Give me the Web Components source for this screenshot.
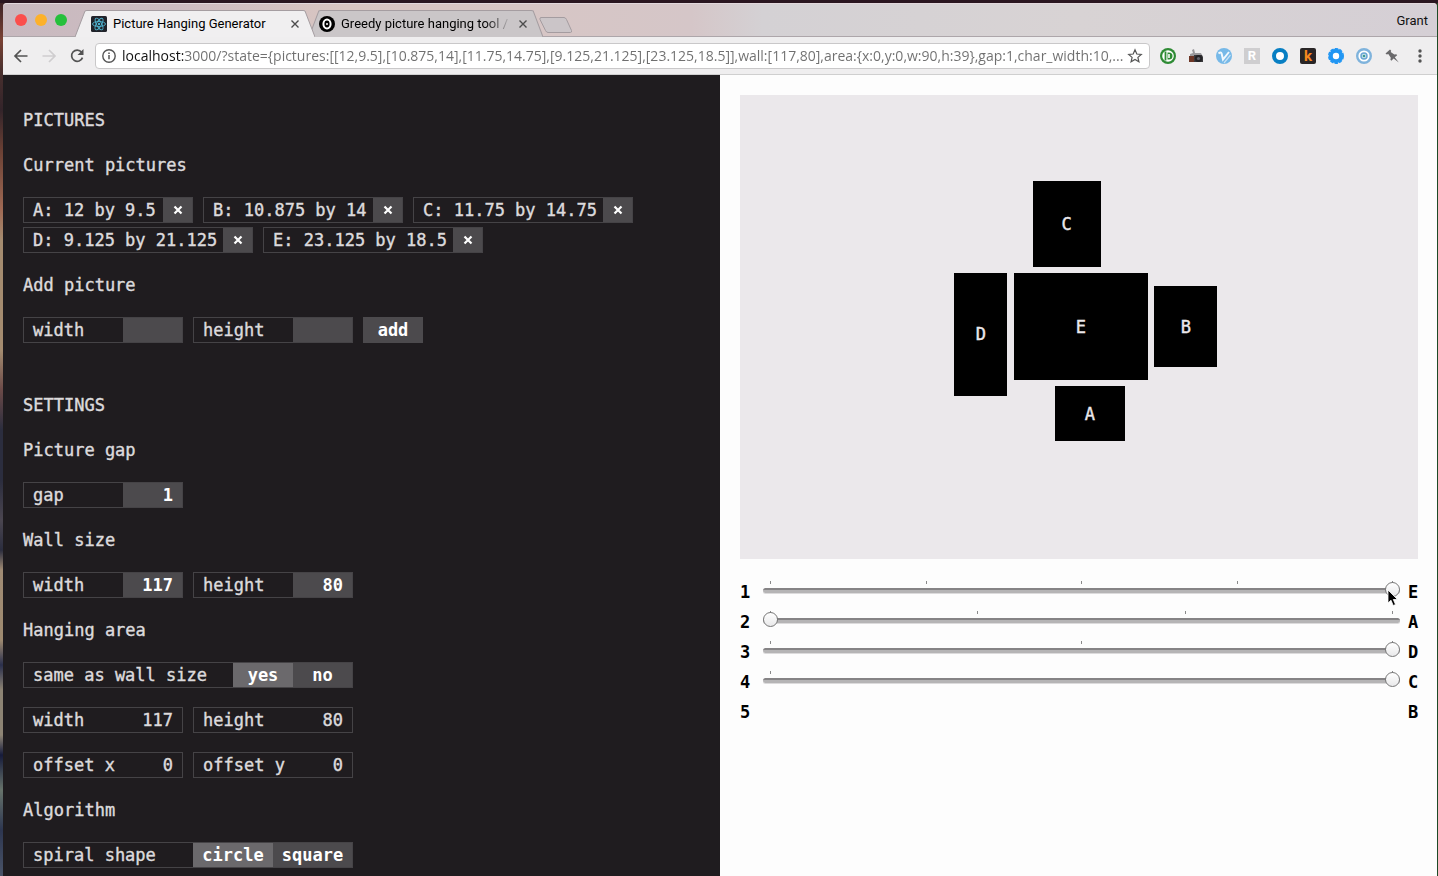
<!DOCTYPE html>
<html lang="en">
<head>
<meta charset="utf-8">
<title>Picture Hanging Generator</title>
<style>
html, body { margin: 0; height: 100%; overflow: hidden; }
body { background: #1a1014; }
</style>
</head>
<body>
<desktop-frame>
  <browser-chrome></browser-chrome>
  <hanging-app></hanging-app>
</desktop-frame>

<script>
const define = (name, html, setup) => {
  const tpl = document.createElement('template');
  tpl.innerHTML = html;
  customElements.define(name, class extends HTMLElement {
    connectedCallback() {
      if (this.shadowRoot) return;
      this.attachShadow({ mode: 'open' }).append(tpl.content.cloneNode(true));
      if (setup) setup(this, this.shadowRoot);
    }
  });
};

/* Width of one character cell, used to size labelled boxes */
const CELL = 10;

define('desktop-frame', `
<style>
:host { display: flex; flex-direction: column; box-sizing: border-box; height: 100vh; padding: 3px 1px 0 3px;
  background:
    linear-gradient(#2a1620, #2a1620) top / 100% 3px no-repeat,
    linear-gradient(#1d4a26, #1d4a26) right / 1px 100% no-repeat,
    linear-gradient(#3a2226 0, #7a4234 40px, #4a302e 70px, #33242a 110px, #6a4034 150px, #a06a54 210px, #a58c70 240px, #a58c70 350px, #6b4a48 390px, #2b2d3e 430px, #2b2d3e 480px, #4b4650 520px, #2b2d3e 550px, #a08b74 570px, #9e8a70 640px, #2a2f4c 665px, #8d8474 690px, #8d8474 735px, #161b3b 755px, #67736b 790px, #2d3650 830px, #4a5468 100%); }
::slotted(hanging-app) { flex: 1; min-height: 0; }
</style>
<slot></slot>`);

define('browser-tab', `
<style>
:host { display: block; flex: none; height: 27px; position: relative; font: 13px Roboto, sans-serif; color: #000; }
svg.shape { position: absolute; inset: 0; width: 100%; height: 100%; }
.row { position: relative; height: 27px; display: flex; align-items: center; padding: 0 15px 0 var(--tab-inset, 16px); gap: 6px; }
.title { flex: 1; min-width: 0; overflow: hidden; white-space: nowrap; }
:host([faded]) .title { -webkit-mask-image: linear-gradient(90deg, #000 84%, transparent); mask-image: linear-gradient(90deg, #000 84%, transparent); }
button { all: unset; width: 10px; height: 10px; display: flex; }
::slotted(svg) { flex: none; }
</style>
<svg class="shape" viewBox="0 0 240 27" preserveAspectRatio="none" aria-hidden="true">
  <path d="M0 27 L10 1 Q11 0.5 12 0.5 L228 0.5 Q229 0.5 230 1 L240 27 Z" fill="var(--tab-fill, #f0eff0)"/>
  <path d="M0 27 L10 1 Q11 0.5 12 0.5 L228 0.5 Q229 0.5 230 1 L240 27" fill="none" stroke="#a59da1" vector-effect="non-scaling-stroke"/>
</svg>
<div class="row"><slot name="icon"></slot><span class="title"><slot></slot></span>
<button aria-label="Close tab"><svg width="10" height="10" viewBox="0 0 10 10"><path d="M1.5 1.5l7 7M8.5 1.5l-7 7" stroke="#4c4c4c" stroke-width="1.4"/></svg></button></div>`);

define('browser-chrome', `
<style>
:host { display: block; flex: none; font-family: Roboto, sans-serif; }
button { all: unset; }
.strip { display: flex; align-items: flex-end; height: 34px; padding: 0 9px 0 12px; border-radius: 4px 4px 0 0;
  background: linear-gradient(90deg, #c8b9bf, #cdbcc1 12%, #d9c6c2 24%, #d5c6c8 48%, #d4d1d4 53%, #d8d3d4 75%, #d5cfd5); box-shadow: inset 0 -1px #ada6aa, inset 0 1px #e2d8dc; }
.lights { display: flex; gap: 8px; align-self: center; width: 60px; }
.lights button { width: 12px; height: 12px; border-radius: 50%; background: var(--c); }
browser-tab:first-of-type { width: 240px; z-index: 1; }
browser-tab:last-of-type { width: 234px; margin-left: -6px; --tab-fill: #cac6c8; --tab-inset: 10px; }
.new { align-self: center; margin: 9px 0 0 -4px; display: flex; }
.user { margin-left: auto; align-self: center; font-size: 13px; color: #111; }
.bar { display: flex; align-items: center; height: 37px; padding: 0 3px 0 4px; background: #efeeef; border-bottom: 1px solid #cfcfcf; }
.bar > button { width: 28px; height: 28px; display: flex; align-items: center; justify-content: center; flex: none; }
.address { flex: 1; min-width: 0; margin: 0 4px; height: 24px; display: flex; align-items: center; padding: 0 6px 0 5px; background: #fff; border: 1px solid #c9c8c9; border-radius: 4px; }
.address svg { flex: none; }
input { all: unset; flex: 1; min-width: 0; margin-left: 5px; height: 24px; font: 14px "Open Sans", sans-serif; color: #6f6f6f; -webkit-text-fill-color: transparent;
  background: linear-gradient(90deg, #111 61px, #6f6f6f 61px); -webkit-background-clip: text; background-clip: text; }
.tile { width: 16px; height: 16px; display: block; text-align: center; font: bold 13px/16px Roboto, sans-serif; color: #fff; background: #cfced0; }
.tile.k { background: #292526; color: #f7891e; border-radius: 2px; font-size: 15px; }
</style>
<div class="strip">
  <div class="lights"><button style="--c:#fb4f4c" aria-label="Close"></button><button style="--c:#fdb12a" aria-label="Minimise"></button><button style="--c:#25c03b" aria-label="Zoom"></button></div>
  <browser-tab>
    <svg slot="icon" width="16" height="16" viewBox="0 0 16 16"><rect width="16" height="16" rx="1.5" fill="#20232a"/><g fill="none" stroke="#4fb4d0" stroke-width=".9"><ellipse cx="8" cy="8" rx="6.5" ry="2.5"/><ellipse cx="8" cy="8" rx="6.5" ry="2.5" transform="rotate(60 8 8)"/><ellipse cx="8" cy="8" rx="6.5" ry="2.5" transform="rotate(120 8 8)"/></g><circle cx="8" cy="8" r="1.2" fill="#4fb4d0"/></svg>Picture Hanging Generator</browser-tab>
  <browser-tab faded>
    <svg slot="icon" width="16" height="16" viewBox="0 0 16 16"><circle cx="8" cy="8" r="8" fill="#000"/><ellipse cx="8" cy="8" rx="3.600" ry="4.400" fill="none" stroke="#fff" stroke-width="2"/><circle cx="8" cy="8" r="1" fill="#fff"/></svg>Greedy picture hanging tool / Grant</browser-tab>
  <button class="new" aria-label="New tab"><svg width="34" height="18" viewBox="0 0 34 18"><path d="M2 1.5h23q1.500 0 2.500 2l5 11q.5 2-1 2H9q-1.500 0-2.500-2L1 3.500Q.5 1.500 2 1.500z" fill="#cbc5c8" stroke="#a49ca0"/></svg></button>
  <span class="user">Grant</span>
</div>
<div class="bar">
  <button aria-label="Back"><svg width="16" height="16" viewBox="0 0 16 16" fill="none" stroke="#535353" stroke-width="1.700"><path d="M14.500 8H2.500M8 2L2 8l6 6"/></svg></button>
  <button aria-label="Forward"><svg width="16" height="16" viewBox="0 0 16 16" fill="none" stroke="#cfcdcf" stroke-width="1.700"><path d="M1.500 8h12M8 2l6 6-6 6"/></svg></button>
  <button aria-label="Reload"><svg width="16" height="16" viewBox="0 0 16 16"><path d="M12.600 4.200A5.600 5.600 0 1 0 13.500 9.600" fill="none" stroke="#535353" stroke-width="1.700"/><path d="M14.500 1v6h-6z" fill="#535353"/></svg></button>
  <label class="address">
    <svg width="16" height="16" viewBox="0 0 16 16" aria-hidden="true"><circle cx="8" cy="8" r="6.200" fill="none" stroke="#555" stroke-width="1.400"/><path d="M8 7v4.300M8 4.400V6" stroke="#555" stroke-width="1.500"/></svg>
    <input type="text" aria-label="Address" value="localhost:3000/?state={pictures:[[12,9.5],[10.875,14],[11.75,14.75],[9.125,21.125],[23.125,18.5]],wall:[117,80],area:{x:0,y:0,w:90,h:39},gap:1,char_width:10,...">
    <svg width="16" height="16" viewBox="0 0 16 16" aria-hidden="true"><path d="M8 1.800l1.800 4.200 4.500.4-3.400 3 1 4.400L8 11.400l-3.900 2.400 1-4.400-3.400-3 4.500-.4z" fill="none" stroke="#555" stroke-width="1.200"/></svg>
  </label>
  <button aria-label="Dashboard extension"><svg width="16" height="16" viewBox="0 0 16 16"><circle cx="8" cy="8" r="8" fill="#2e8b34"/><circle cx="8" cy="8" r="5.800" fill="#fff"/><path d="M5.500 3.500v9" stroke="#2e8b34" stroke-width="1.800"/><path d="M7.500 4.500H9a3.500 3.500 0 0 1 0 7H7.500z" fill="#2e8b34"/><path d="M9 6v4" stroke="#fff" stroke-width="1.600"/></svg></button>
  <button aria-label="Camera"><svg width="16" height="16" viewBox="0 0 16 16"><path d="M4 2l2-1 1 4h6l1 2v3H2V6l3-1z" fill="#9a999c"/><path d="M1 8h6v6H1z" fill="#6d3626"/><path d="M6 7h8l1 2v5H6z" fill="#3a393c"/><circle cx="10.500" cy="10.500" r="3.600" fill="#232225"/><circle cx="10.500" cy="10.500" r="1.600" fill="#62636b"/></svg></button>
  <button aria-label="Vector extension"><svg width="16" height="16" viewBox="0 0 16 16"><circle cx="8" cy="8" r="8" fill="#77b9e8"/><path d="M2.500 5.500q2.500-2 3.100 0L7 11.500l6-7.500" fill="none" stroke="#f2f8fd" stroke-width="2"/><path d="M8 15l6.500-8" fill="none" stroke="#c9e2f5" stroke-width="1.200"/></svg></button>
  <button aria-label="Reader"><span class="tile">R</span></button>
  <button aria-label="Ring extension"><svg width="16" height="16" viewBox="0 0 16 16"><circle cx="8" cy="8" r="6" fill="#fff" stroke="#087fc3" stroke-width="4"/></svg></button>
  <button aria-label="Keyword extension"><span class="tile k">k</span></button>
  <button aria-label="Gear extension"><svg width="16" height="16" viewBox="0 0 16 16"><circle cx="8" cy="8" r="5.200" fill="#fff" stroke="#2196f3" stroke-width="4"/><circle cx="8" cy="8" r="7.300" fill="none" stroke="#2196f3" stroke-width="1.400" stroke-dasharray="3.500 1.200"/></svg></button>
  <button aria-label="Eye extension"><svg width="16" height="16" viewBox="0 0 16 16"><circle cx="8" cy="8" r="6.800" fill="#fff" stroke="#7fb3dc" stroke-width="2.400"/><circle cx="8" cy="8" r="3" fill="#cfe4ea" stroke="#6ba6d4" stroke-width="1.500"/><circle cx="8" cy="8" r="1.300" fill="#3b9a93"/></svg></button>
  <button aria-label="Pin"><svg width="16" height="16" viewBox="0 0 16 16"><path d="M1.500 5.500L6 1.500l1.200 1.200-.5 1.300 3.600 2.600 2-.3.900 1-2.400 2 4 5.200-5.200-4-2.200 2.300-1-1 .4-2-2.500-3.700-1.500.4z" fill="#6a696b"/></svg></button>
  <button aria-label="Menu"><svg width="16" height="16" viewBox="0 0 16 16" fill="#535353"><circle cx="8" cy="3" r="1.700"/><circle cx="8" cy="8" r="1.700"/><circle cx="8" cy="13" r="1.700"/></svg></button>
</div>`);

/* A picture in the list, with its remove button */
define('picture-chip', `
<style>
:host { display: flex; align-items: center; height: 30px; }
.box { display: flex; box-sizing: border-box; height: 26px; line-height: 26px; border: 1px solid #454346; }
.text { box-sizing: border-box; width: calc(var(--cells) * 1px); padding-left: 9px; line-height: 24px; white-space: nowrap; }
button { all: unset; width: 29px; height: 24px; background: #4c4a4d; display: flex; align-items: center; justify-content: center; }
</style>
<div class="box"><span class="text"><slot></slot></span><button aria-label="Remove"><svg width="10" height="10" viewBox="0 0 10 10"><path d="M1.500 1.500l7 7M8.500 1.500l-7 7" stroke="#fff" stroke-width="2.200"/></svg></button></div>`,
(host, root) => root.querySelector('.text').style.setProperty('--cells', host.textContent.length * CELL + 19));

/* A labelled number box */
define('number-field', `
<style>
:host { display: flex; align-items: center; height: 30px; width: 160px; }
label { flex: 1; display: flex; box-sizing: border-box; height: 26px; line-height: 24px; border: 1px solid #454346; white-space: nowrap; }
span { flex: 1; padding-left: 9px; }
input { all: unset; box-sizing: border-box; width: 59px; height: 24px; padding-right: 9px; text-align: right; background: #4c4a4d; color: #fff; font: inherit; font-weight: bold; -webkit-text-stroke: 0; }
:host([locked]) input { background: none; color: #dcdadc; font-weight: normal; -webkit-text-stroke: inherit; width: 49px; }
</style>
<label><span><slot></slot></span><input type="text" inputmode="decimal"></label>`,
(host, root) => {
  const input = root.querySelector('input');
  input.value = host.getAttribute('value') || '';
  input.disabled = host.hasAttribute('locked');
});

/* A labelled pair of buttons of which one is on */
define('choice-field', `
<style>
:host { display: flex; align-items: center; height: 30px; width: 330px; }
.box { flex: 1; display: flex; box-sizing: border-box; height: 26px; line-height: 24px; border: 1px solid #454346; white-space: nowrap; }
span { flex: 1; padding-left: 9px; }
button { all: unset; box-sizing: border-box; width: var(--w); text-align: center; background: #4c4a4d; color: #fff; font-weight: bold; -webkit-text-stroke: 0; }
button:last-child { width: calc(var(--w) - 1px); }
button[aria-pressed=true] { background: #6b696c; }
</style>
<div class="box" role="group"><span><slot></slot></span></div>`,
(host, root) => {
  const box = root.querySelector('.box');
  host.getAttribute('options').split(',').forEach((name, i) => {
    const b = document.createElement('button');
    b.textContent = name;
    b.setAttribute('aria-pressed', i === 0);
    box.append(b);
  });
});

/* The thin text stroke gives the labels a medium weight */
define('settings-panel', `
<style>
:host { display: flex; flex-direction: column; gap: 15px; box-sizing: border-box; padding: 30px 20px; overflow: hidden; background: #1f1c1f; color: #dcdadc;
  font: 17px/30px "DejaVu Sans Mono", monospace; -webkit-text-stroke: 0.4px; }
h1, h2 { margin: 0; font: inherit; }
h1:not(:first-of-type) { margin-top: 30px; }
.row { display: flex; flex-wrap: wrap; column-gap: 10px; }
.add { all: unset; align-self: center; width: 60px; height: 26px; line-height: 26px; text-align: center; background: #4c4a4d; color: #fff; font-weight: bold; -webkit-text-stroke: 0; }
</style>
<h1>PICTURES</h1>
<h2>Current pictures</h2>
<div class="row"><picture-chip>A: 12 by 9.5</picture-chip><picture-chip>B: 10.875 by 14</picture-chip><picture-chip>C: 11.75 by 14.75</picture-chip><picture-chip>D: 9.125 by 21.125</picture-chip><picture-chip>E: 23.125 by 18.5</picture-chip></div>
<h2>Add picture</h2>
<div class="row"><number-field>width</number-field><number-field>height</number-field><button class="add">add</button></div>
<h1>SETTINGS</h1>
<h2>Picture gap</h2>
<div class="row"><number-field value="1">gap</number-field></div>
<h2>Wall size</h2>
<div class="row"><number-field value="117">width</number-field><number-field value="80">height</number-field></div>
<h2>Hanging area</h2>
<div class="row"><choice-field options="yes,no" style="--w:60px">same as wall size</choice-field></div>
<div class="row"><number-field locked value="117">width</number-field><number-field locked value="80">height</number-field></div>
<div class="row"><number-field locked value="0">offset x</number-field><number-field locked value="0">offset y</number-field></div>
<h2>Algorithm</h2>
<div class="row"><choice-field options="circle,square" style="--w:80px">spiral shape</choice-field></div>`);

/* The wall, 117 by 80 inches, with each picture placed in inches */
const WALL = { w: 117, h: 80 };
const HUNG = [
  ['C', 50.5, 14.875, 11.75, 14.75],
  ['D', 37, 30.75, 9.125, 21.125],
  ['E', 47.25, 30.75, 23.125, 18.5],
  ['B', 71.5, 33, 10.875, 14],
  ['A', 54.375, 50.25, 12, 9.5]
];
define('wall-view', `
<style>
:host { display: block; position: relative; aspect-ratio: 117 / 80; background: #ebe8eb; -webkit-text-stroke: 0.4px; }
div { position: absolute; display: flex; align-items: center; justify-content: center; background: #000; color: #ebe8eb; }
</style>`,
(host, root) => {
  for (const [name, x, y, w, h] of HUNG) {
    const d = document.createElement('div');
    d.textContent = name;
    d.style.left = x / WALL.w * 100 + '%';
    d.style.top = y / WALL.h * 100 + '%';
    d.style.width = w / WALL.w * 100 + '%';
    d.style.height = h / WALL.h * 100 + '%';
    root.append(d);
  }
});

define('order-slider', `
<style>
:host { display: flex; align-items: center; height: 30px; color: #000; font-weight: bold; }
label, output { width: 10px; }
.slot { flex: 1; display: grid; margin: 0 8px 0 13px; height: 30px; }
.slot > * { grid-area: 1 / 1; }
.ticks { display: flex; justify-content: space-between; padding: 4px 7px 0; }
.ticks i { width: 1px; height: 3px; background: #8a8a8a; }
input { -webkit-appearance: none; appearance: none; margin: 0; width: 100%; height: 28px; background: none; z-index: 0; }
input::-webkit-slider-runnable-track { height: 5px; border-radius: 3px; background: linear-gradient(#858385 2px, #b5b4b5 2px); box-shadow: 0 1px #dcdbdc; }
input::-webkit-slider-thumb { -webkit-appearance: none; box-sizing: border-box; width: 15px; height: 15px; margin-top: -6px; border: 1px solid #777; border-radius: 50%; background: linear-gradient(#fff, #e9e9ea); }
</style>
<label for="r"></label><div class="slot"></div><output></output>`,
(host, root) => {
  const steps = +host.getAttribute('steps');
  root.querySelector('label').textContent = host.getAttribute('rank');
  root.querySelector('output').textContent = host.getAttribute('picture');
  if (!steps) return;
  const slot = root.querySelector('.slot');
  slot.innerHTML = '<div class="ticks">' + '<i></i>'.repeat(steps + 1) + '</div><input id="r" type="range" min="0">';
  const input = slot.querySelector('input');
  input.max = steps;
  input.value = host.getAttribute('value');
});

define('hanging-app', `
<style>
:host { display: grid; grid-template-columns: 1fr 1fr; background: #fdfdfd; font: 17px/30px "DejaVu Sans Mono", monospace; overflow: hidden; }
main { position: relative; padding: 20px 19px 20px 20px; }
.order { padding-top: 18px; }
.cursor { position: absolute; top: 514px; right: 38px; }
</style>
<settings-panel></settings-panel>
<main>
  <wall-view></wall-view>
  <div class="order">
    <order-slider rank="1" steps="4" value="4" picture="E"></order-slider>
    <order-slider rank="2" steps="3" value="0" picture="A"></order-slider>
    <order-slider rank="3" steps="2" value="2" picture="D"></order-slider>
    <order-slider rank="4" steps="1" value="1" picture="C"></order-slider>
    <order-slider rank="5" picture="B"></order-slider>
  </div>
  <svg class="cursor" width="12" height="18" viewBox="0 0 12 18" aria-hidden="true"><path d="M1 1v13l3-2.800 2.200 5.300 2.300-1L6.300 10.500h4.200z" fill="#000" stroke="#fff" stroke-width=".8"/></svg>
</main>`);
</script>
</body>
</html>
